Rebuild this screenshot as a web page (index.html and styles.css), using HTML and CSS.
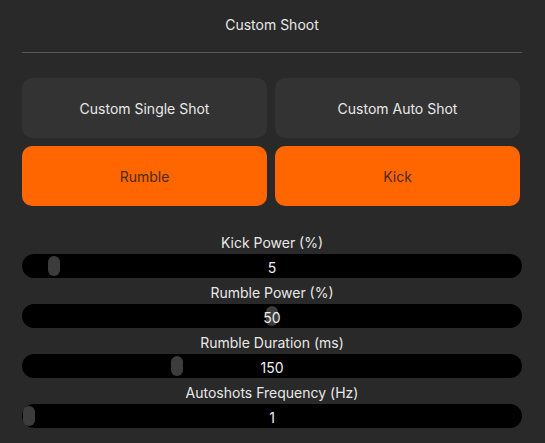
FILE: index.html
```html
<!DOCTYPE html>
<html>
<head>
  <title>Custom Shoot</title>
  <link rel="stylesheet" href="styles.css">
</head>
<body>
  <div class="panel">
    <h1 class="title">Custom Shoot</h1>
    <hr class="divider">

    <div class="button-grid">
      <button class="btn">Custom Single Shot</button>
      <button class="btn">Custom Auto Shot</button>
      <button class="btn btn-active">Rumble</button>
      <button class="btn btn-active">Kick</button>
    </div>

    <div class="sliders">
      <div class="slider">
        <div class="slider-label">Kick Power (%)</div>
        <div class="slider-track">
          <span class="slider-thumb" style="left: 26px"></span>
          <span class="slider-value">5</span>
        </div>
      </div>
      <div class="slider">
        <div class="slider-label">Rumble Power (%)</div>
        <div class="slider-track">
          <span class="slider-thumb" style="left: 244px"></span>
          <span class="slider-value">50</span>
        </div>
      </div>
      <div class="slider">
        <div class="slider-label">Rumble Duration (ms)</div>
        <div class="slider-track">
          <span class="slider-thumb" style="left: 149px"></span>
          <span class="slider-value">150</span>
        </div>
      </div>
      <div class="slider">
        <div class="slider-label">Autoshots Frequency (Hz)</div>
        <div class="slider-track">
          <span class="slider-thumb" style="left: 1px"></span>
          <span class="slider-value">1</span>
        </div>
      </div>
    </div>
  </div>
</body>
</html>
```

FILE: styles.css
```css
body {
  margin: 0;
  padding: 0;
  background-color: #292929;
  color: #e8e8e8;
  font-family: Inter, "Liberation Sans", sans-serif;
  font-size: 14px;
}

.panel {
  width: 500px;
  margin-left: 22px;
  padding-top: 15px;
}

.title {
  margin: 0;
  font-size: 14px;
  font-weight: 400;
  line-height: 20px;
  text-align: center;
}

.divider {
  margin: 17px 0 25px;
  border: none;
  border-top: 1px solid #55555a;
}

.button-grid {
  display: grid;
  grid-template-columns: 1fr 1fr;
  gap: 8px;
  padding-right: 2px;
}

.btn {
  height: 60px;
  border: none;
  border-radius: 10px;
  background-color: #333333;
  color: #e8e8e8;
  font-family: inherit;
  font-size: 14px;
}

.btn-active {
  background-color: #ff6600;
  color: #4a2c16;
}

.sliders {
  margin-top: 26px;
}

.slider {
  margin-bottom: 4px;
}

.slider-label {
  line-height: 20px;
  padding-top: 1px;
  margin-bottom: 1px;
  text-align: center;
}

.slider-track {
  position: relative;
  height: 24px;
  border-radius: 12px;
  background-color: #000;
  text-align: center;
  line-height: 24px;
}

.slider-thumb {
  position: absolute;
  top: 2px;
  width: 12px;
  height: 20px;
  border-radius: 6px;
  background-color: #3c3c3c;
}

.slider-value {
  position: relative;
  top: 2px;
  color: #f0f0f0;
}
```
